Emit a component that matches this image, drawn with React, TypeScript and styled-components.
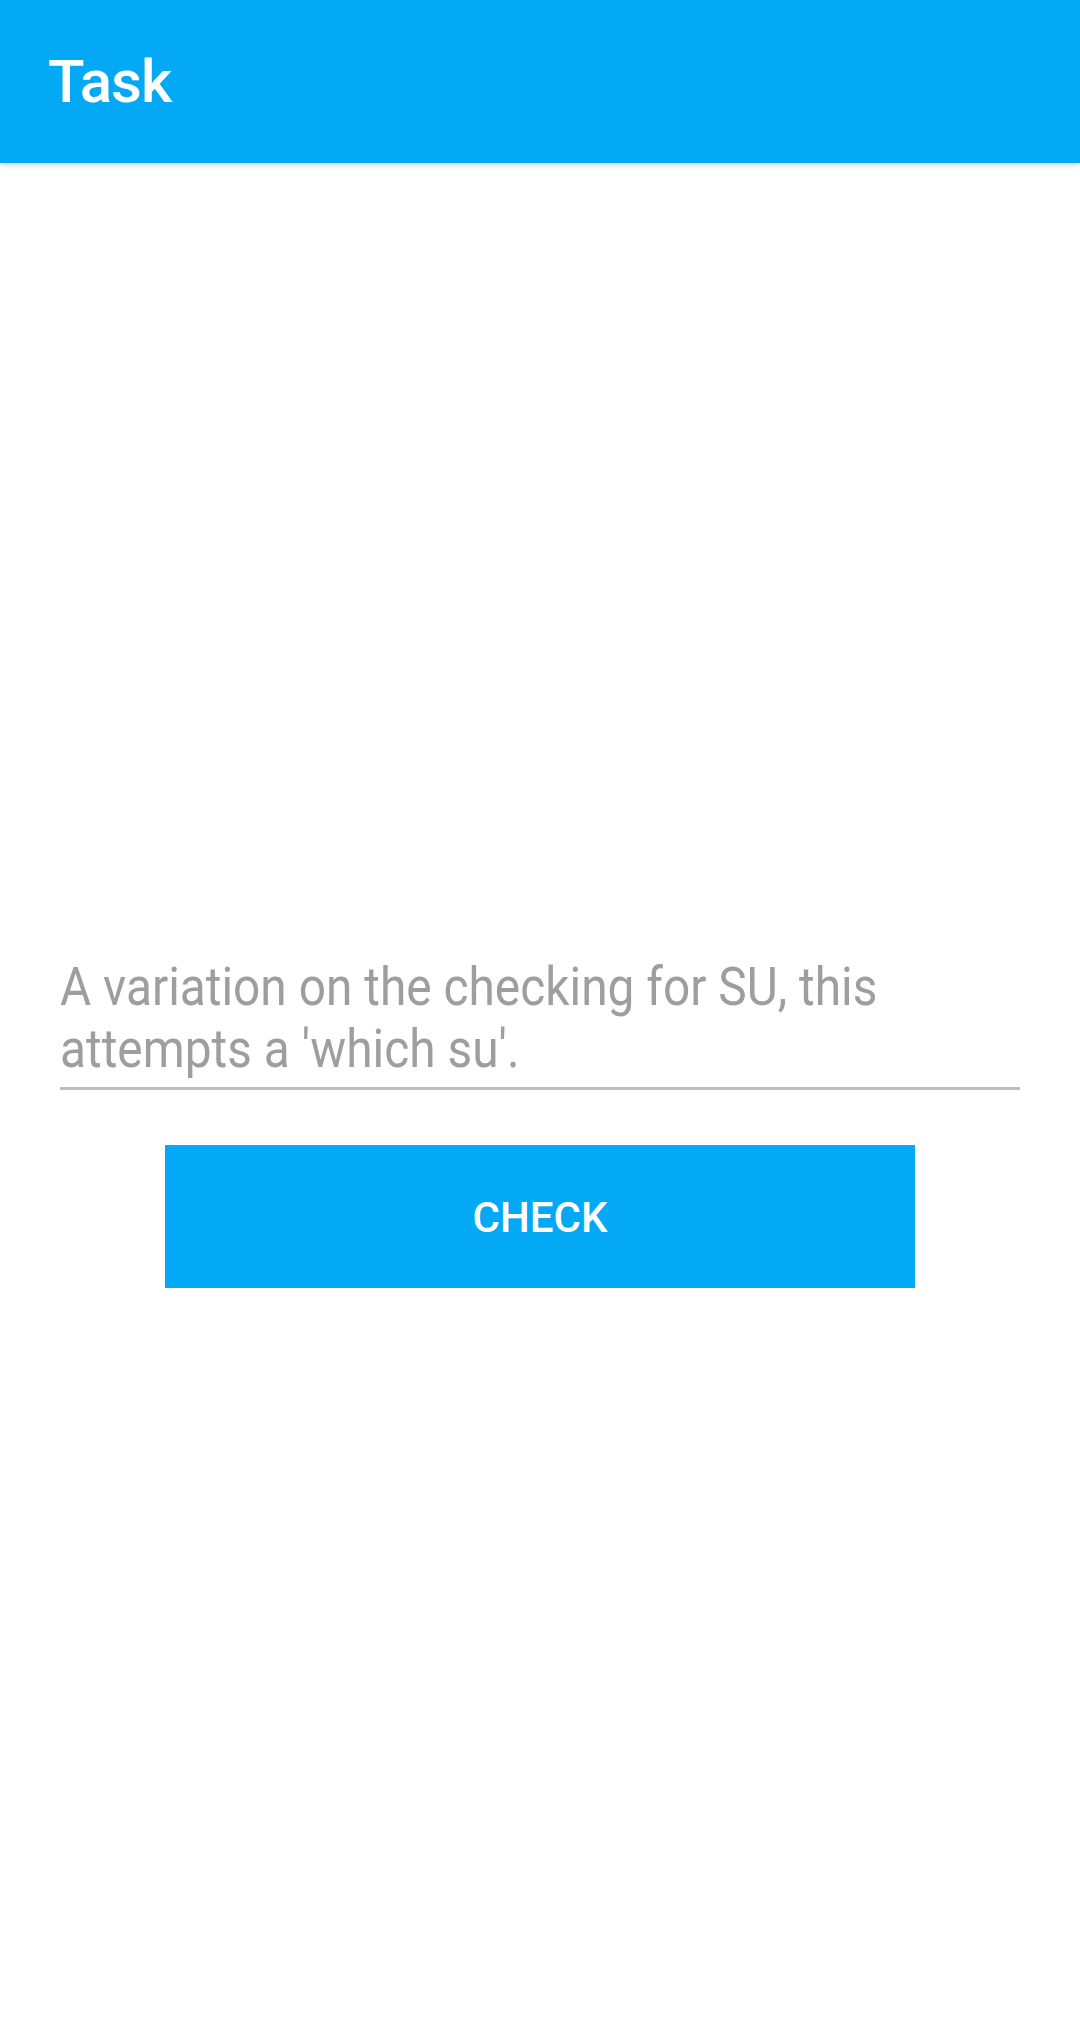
import React from "react";
import styled, { createGlobalStyle } from "styled-components";

const Global = createGlobalStyle`
  html, body { margin: 0; padding: 0; background: #ffffff; overflow: hidden; }
  body { font-family: Roboto, "Noto Sans", sans-serif; }
`;

const Page = styled.div`
  width: 1080px;
  min-height: 2032px;
  background: #ffffff;
  display: flex;
  flex-direction: column;
`;

const AppBar = styled.header`
  height: 163px;
  background: #03a9f4;
  display: flex;
  align-items: center;
  padding-left: 48px;
  box-shadow: 0 2px 6px rgba(0, 0, 0, 0.18);
  position: relative;
  z-index: 1;
`;

const Title = styled.h1`
  margin: 0;
  font-family: Roboto, sans-serif;
  font-weight: 500;
  font-size: 60px;
  color: #ffffff;
  letter-spacing: -1px;
`;

const Content = styled.main`
  display: flex;
  flex-direction: column;
  align-items: center;
  padding: 793px 60px 0;
`;

const Field = styled.div`
  align-self: stretch;
  padding-bottom: 7px;
  border-bottom: 3px solid #bdbdbd;
  overflow: hidden;
`;

const Hint = styled.p`
  margin: 0;
  width: 1082px;
  font-family: Roboto, sans-serif;
  font-size: 54px;
  line-height: 62px;
  color: #9e9e9e;
  transform: scaleX(0.886);
  transform-origin: left center;
`;

const Button = styled.button`
  margin-top: 55px;
  width: 750px;
  height: 143px;
  border: none;
  background: #03a9f4;
  color: #ffffff;
  font-family: Roboto, sans-serif;
  font-weight: 500;
  font-size: 42px;
  text-transform: uppercase;
  padding-top: 2px;
  cursor: pointer;
`;

export default function App() {
  return (
    <Page>
      <Global />
      <AppBar>
        <Title>Task</Title>
      </AppBar>
      <Content>
        <Field>
          <Hint>A variation on the checking for SU, this attempts a 'which su'.</Hint>
        </Field>
        <Button>Check</Button>
      </Content>
    </Page>
  );
}
